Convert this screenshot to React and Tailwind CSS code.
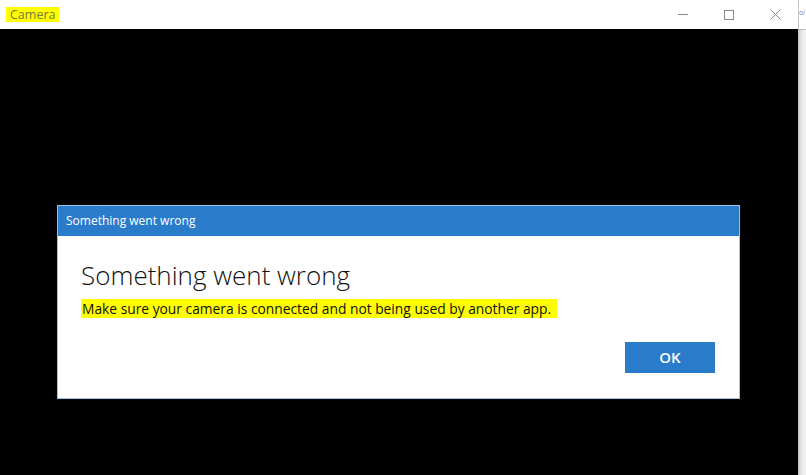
export default function App() {
  return (
    <div className="flex h-[475px] w-[806px] overflow-hidden bg-black font-['Open_Sans',sans-serif]">
      <div className="flex w-[798px] shrink-0 flex-col">
        {/* title bar */}
        <div className="flex h-[29px] items-center bg-white">
          <span className="ml-[6px] bg-[#ffff00] px-[4px] text-[12.5px] leading-[15px] text-[#7a7a3a]">
            Camera
          </span>
          <div className="ml-auto flex h-full items-center">
            <div className="flex h-full w-[46px] items-center justify-center">
              <div className="h-px w-[10px] bg-[#8a8a8a]" />
            </div>
            <div className="flex h-full w-[46px] items-center justify-center">
              <div className="h-[10px] w-[10px] border border-[#8a8a8a]" />
            </div>
            <div className="flex h-full w-[46px] items-center justify-center">
              <svg width="11" height="11" viewBox="0 0 11 11">
                <path d="M0.5 0.5L10.5 10.5M10.5 0.5L0.5 10.5" stroke="#8a8a8a" strokeWidth="1" />
              </svg>
            </div>
          </div>
        </div>

        {/* camera view */}
        <div className="flex-1 bg-black pl-[57px] pt-[176px]">
          <div className="flex h-[194px] w-[683px] flex-col border border-[#9ec2e6] bg-white">
            <div className="flex h-[30px] items-center bg-[#2b7bcb] pl-[8px] text-[12px] text-white">
              Something went wrong
            </div>
            <div className="flex flex-1 flex-col pl-[23px] pr-[24px]">
              <h1 className="mt-[21px] text-[26px] font-light leading-[36px] text-[#111]">
                Something went wrong
              </h1>
              <p className="mt-[6px] self-start bg-[#ffff00] pl-px pr-[6px] text-[13.8px] leading-[19px] text-[#111]">
                Make sure your camera is connected and not being used by another app.
              </p>
              <div className="mt-[24px] flex justify-end">
                <button className="h-[31px] w-[90px] bg-[#2b7bcb] text-[15px] font-semibold text-white">
                  OK
                </button>
              </div>
            </div>
          </div>
        </div>
      </div>

      {/* window behind */}
      <div className="flex flex-1 flex-col overflow-hidden border-l border-[#c8c8c8] bg-gradient-to-r from-[#d4d4d4] via-[#ececec] to-[#f4f4f4]">
        <div className="h-[29px] bg-white pt-[8px] text-[7px] leading-[10px] tracking-tighter text-[#8a7fb3]">o/</div>
        <div className="h-px bg-[#b8b8b8]" />
      </div>
    </div>
  );
}
